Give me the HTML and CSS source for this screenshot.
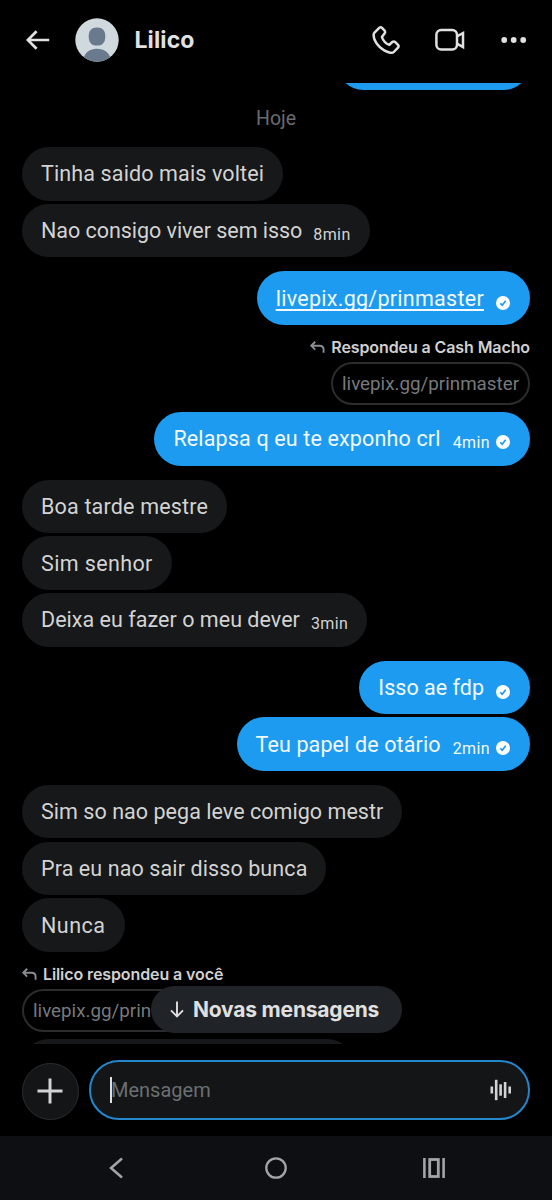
FILE: index.html
```html
<!DOCTYPE html>
<html lang="pt-BR">
<head>
<meta charset="utf-8">
<title>Lilico</title>
<link rel="stylesheet" href="styles.css">
</head>
<body>
<svg class="defs" width="0" height="0">
  <symbol id="sent" viewBox="0 0 14 14"><circle cx="7" cy="7" r="7" fill="#fff"/><path d="M4.3 7.4 6.2 9.2 9.7 4.8" fill="none" stroke="#1d9bf0" stroke-width="1.7"/></symbol>
  <symbol id="reply" viewBox="0 0 15 13"><path d="M5.2.8 1.2 4.7 5.2 8.6M1.5 4.7H9.5Q13.6 4.7 13.6 8.8V11.8" fill="none" stroke="currentColor" stroke-width="1.9"/></symbol>
</svg>
<div class="app">
  <header class="topbar">
    <svg class="back" viewBox="0 0 24 20"><path d="M10.6 1.2 1.8 10 10.6 18.8M2 10H23.2" fill="none" stroke="currentColor" stroke-width="2.700"/></svg>
    <svg class="avatar" viewBox="0 0 44 44"><defs><clipPath id="face"><circle cx="22" cy="22" r="21.7"/></clipPath></defs><g clip-path="url(#face)"><rect width="44" height="44" fill="#cfd9de"/><path d="M22 9.5C27.5 9.5 30.3 12.8 30.3 18.2 30.3 24 28 27.5 22 27.5S13.7 24 13.7 18.2C13.7 12.8 16.5 9.5 22 9.5Z" fill="#687a8c"/><path d="M8 42C9.5 34.5 15 30.8 22 30.8S34.500 34.500 36 42V46H8Z" fill="#687a8c"/></g></svg>
    <h1 class="name">Lilico</h1>
    <svg class="phone" viewBox="0 0 28 30"><path d="M2.500 7.600 7.200 2.900Q8.600 1.600 10 2.900L12.400 5.400Q13.600 6.700 12.700 8.200L9.900 12C11 15.500 13.600 18.400 17.300 19.900L20.300 17Q21.900 15.900 23.300 17.200L26 19.900Q27.200 21.300 26 22.700L21.800 27C20.800 28 19.700 28 18.300 27.700 9.500 25.800 2.200 17.800 1.600 10.300Q1.500 8.600 2.500 7.600Z" fill="none" stroke="currentColor" stroke-width="2.500" stroke-linejoin="round"/></svg>
    <svg class="video" viewBox="0 0 30 24"><rect x="1.400" y="2" width="20.600" height="19.600" rx="4.800" fill="none" stroke="currentColor" stroke-width="2.500"/><path d="M22 8.300 28 5V19L22 15.600" fill="none" stroke="currentColor" stroke-width="2.500"/></svg>
    <svg class="more" viewBox="0 0 26 8"><g fill="currentColor"><circle cx="3.200" cy="4" r="2.900"/><circle cx="12.700" cy="4" r="2.900"/><circle cx="22.200" cy="4" r="2.900"/></g></svg>
  </header>

  <main class="thread">
    <div class="group out"><div class="bubble prev"></div></div>
    <div class="day">Hoje</div>

    <div class="group in">
      <div class="bubble"><span class="t-tinha">Tinha saido mais voltei</span></div>
      <div class="bubble"><span class="t-nao">Nao consigo viver sem isso</span><time>8min</time></div>
    </div>

    <div class="group out">
      <div class="bubble"><a class="t-link">livepix.gg/prinmaster</a><svg class="tick"><use href="#sent"/></svg></div>
    </div>

    <div class="group out answer">
      <div class="label"><svg><use href="#reply"/></svg><span>Respondeu a Cash Macho</span></div>
      <div class="quote">livepix.gg/prinmaster</div>
      <div class="bubble"><span class="t-relapsa">Relapsa q eu te exponho crl</span><time>4min</time><svg class="tick timed"><use href="#sent"/></svg></div>
    </div>

    <div class="group in">
      <div class="bubble"><span class="t-boa">Boa tarde mestre</span></div>
      <div class="bubble"><span class="t-senhor">Sim senhor</span></div>
      <div class="bubble"><span class="t-deixa">Deixa eu fazer o meu dever</span><time>3min</time></div>
    </div>

    <div class="group out">
      <div class="bubble"><span class="t-isso">Isso ae fdp</span><svg class="tick"><use href="#sent"/></svg></div>
      <div class="bubble"><span class="t-teu">Teu papel de otário</span><time>2min</time><svg class="tick timed"><use href="#sent"/></svg></div>
    </div>

    <div class="group in">
      <div class="bubble"><span class="t-sim">Sim so nao pega leve comigo mestr</span></div>
      <div class="bubble"><span class="t-pra">Pra eu nao sair disso bunca</span></div>
      <div class="bubble"><span class="t-nunca">Nunca</span></div>
    </div>

    <div class="group in answer last">
      <div class="label"><svg><use href="#reply"/></svg><span>Lilico respondeu a você</span></div>
      <div class="quote cut">livepix.gg/prin</div>
      <div class="bubble next"></div>
    </div>

    <button class="jump"><svg viewBox="0 0 14 17"><path d="M7 .5V15M1 9.300 7 15.300 13 9.300" fill="none" stroke="currentColor" stroke-width="1.900"/></svg><span>Novas mensagens</span></button>
  </main>

  <footer class="composer">
    <button class="plus"><svg viewBox="0 0 26 26"><path d="M13 .5V25.500M.5 13H25.500" stroke="currentColor" stroke-width="3"/></svg></button>
    <div class="field"><i class="caret"></i><span class="placeholder">Mensagem</span><svg class="voice" viewBox="0 0 22 22"><g fill="currentColor"><rect x=".5" y="7.500" width="2.600" height="7"/><rect x="4.900" y=".8" width="2.600" height="20.400"/><rect x="9.300" y="5.300" width="2.600" height="11.400"/><rect x="13.800" y="3" width="2.600" height="16"/><rect x="18.400" y="7.500" width="2.600" height="7"/></g></svg></div>
  </footer>

  <nav class="sysnav">
    <svg class="nav-back" viewBox="0 0 14 22"><path d="M13 1.500 2 11 13 20.500" fill="none" stroke="currentColor" stroke-width="2.500"/></svg>
    <svg class="nav-home" viewBox="0 0 22 22"><circle cx="11" cy="11" r="9.700" fill="none" stroke="currentColor" stroke-width="2.300"/></svg>
    <svg class="nav-apps" viewBox="0 0 22 20"><path d="M1.400 0V20M20.600 0V20" stroke="currentColor" stroke-width="2.600"/><rect x="6.700" y="1.500" width="8.600" height="17" fill="none" stroke="currentColor" stroke-width="2.800"/></svg>
  </nav>
</div>
</body>
</html>
```
FILE: styles.css
```css
* { box-sizing: border-box; }
body { margin: 0; background: #000; color: #d3d3d3; font-family: Roboto, "Liberation Sans", sans-serif; }
svg { display: block; flex: none; }
.defs { position: absolute; }
button { border: 0; padding: 0; color: inherit; font: inherit; }
.app { width: 552px; height: 1200px; display: flex; flex-direction: column; overflow: hidden; }

.topbar { height: 83px; flex: none; display: flex; align-items: center; padding: 0 25px 3px 26px; color: #e1e1e1; }
.back { width: 24px; height: 20px; margin-right: 25px; }
.avatar { width: 44px; height: 44px; margin-right: 15.500px; }
.name { flex: 1; margin: 0; font: 700 23px/30px Inter, sans-serif; letter-spacing: .12px; }
.phone { width: 28px; height: 30px; margin-right: 35px; }
.video { width: 30px; height: 24px; margin-right: 36px; }
.more { width: 26px; height: 8px; }

.thread { position: relative; height: 960.500px; flex: none; overflow: hidden; padding: 0 22px; display: flex; flex-direction: column; }
.group { display: flex; flex-direction: column; gap: 3.400px; margin-bottom: 14px; flex: none; }
.in { align-items: flex-start; }
.out { align-items: flex-end; }
.bubble { height: 53.400px; flex: none; border-radius: 27px; padding: 1px 19px 0; display: flex; align-items: center; background: #16181a; font-size: 21.500px; line-height: 26px; white-space: nowrap; }
.out .bubble { background: #1d9bf0; color: #f2f9ff; }
.bubble.prev { width: 193.500px; margin-top: -46.400px; }
.bubble.next { width: 332px; margin-top: 4px; }
.day { text-align: center; font-size: 19.500px; line-height: 24px; color: #686c70; margin: 3px 0 16.200px; }

time { font-size: 16px; line-height: 20px; letter-spacing: .4px; margin: 8px 0 0 11px; }
.out time { margin-left: 12px; }
.tick { width: 14px; height: 14px; margin: 9px 0 0 12px; }
.tick.timed { margin: 6px 0 0 6px; }
.out .bubble:has(.tick) { padding-right: 20px; }

.t-tinha { letter-spacing: .13px; }
.t-nao { letter-spacing: -.04px; }
.t-link { letter-spacing: .27px; text-decoration: underline; text-decoration-thickness: 2px; text-underline-offset: 3px; text-decoration-skip-ink: none; }
.t-relapsa { letter-spacing: .15px; }
.t-boa { letter-spacing: .18px; }
.t-senhor { letter-spacing: .38px; }
.t-deixa { letter-spacing: .03px; }
.t-isso { letter-spacing: .02px; }
.t-teu { letter-spacing: .12px; }
.t-sim { letter-spacing: .04px; }
.t-pra { letter-spacing: .1px; }
.t-nunca { letter-spacing: .5px; }

.answer { gap: 0; }
.label { height: 23px; display: flex; align-items: center; gap: 6px; padding-bottom: 6px; font: 600 16px/17px Inter, sans-serif; letter-spacing: -.1px; color: #d0d0d0; }
.label svg { width: 15px; height: 13px; color: #8a8d90; }
.quote { height: 43.500px; border: 2px solid #2b2c2e; border-radius: 22px; padding: 0 9px; font-size: 18.800px; line-height: 41px; color: #77797d; white-space: nowrap; margin-bottom: 7px; }
.out .quote { width: 199px; }
.quote.cut { width: 199px; margin-bottom: 3px; }

.jump { position: absolute; left: 151px; top: 903px; width: 251px; height: 47px; border-radius: 24px; background: #202327; display: flex; align-items: center; gap: 9px; padding-left: 19px; font: 700 21px/28px Inter, sans-serif; letter-spacing: -.2px; color: #e0e0e0; }
.jump svg { width: 14px; height: 17px; }

.composer { height: 92.500px; flex: none; display: flex; align-items: flex-end; gap: 10.500px; padding: 0 22px 16.500px; }
.plus { width: 56.500px; height: 56.500px; border-radius: 50%; border: 1.500px solid #2c2d2f; background: #131516; display: flex; align-items: center; justify-content: center; }
.plus svg { width: 26px; height: 26px; }
.field { flex: 1; height: 60px; border-radius: 30px; border: 2px solid #2487cc; background: #131516; display: flex; align-items: center; padding: 0 16px 0 19px; }
.caret { width: 2px; height: 26px; background: #e0e0e0; }
.placeholder { flex: 1; font-size: 20px; line-height: 26px; margin-left: -1px; color: #6b6f73; }
.voice { width: 22px; height: 22px; }

.sysnav { height: 64px; flex: none; display: flex; align-items: center; background: #0e0f13; color: #a3a4a6; padding-left: 109px; }
.nav-back { width: 14px; height: 22px; }
.nav-home { width: 22px; height: 22px; margin-left: 142px; }
.nav-apps { width: 22px; height: 20px; margin-left: 136px; }
```
